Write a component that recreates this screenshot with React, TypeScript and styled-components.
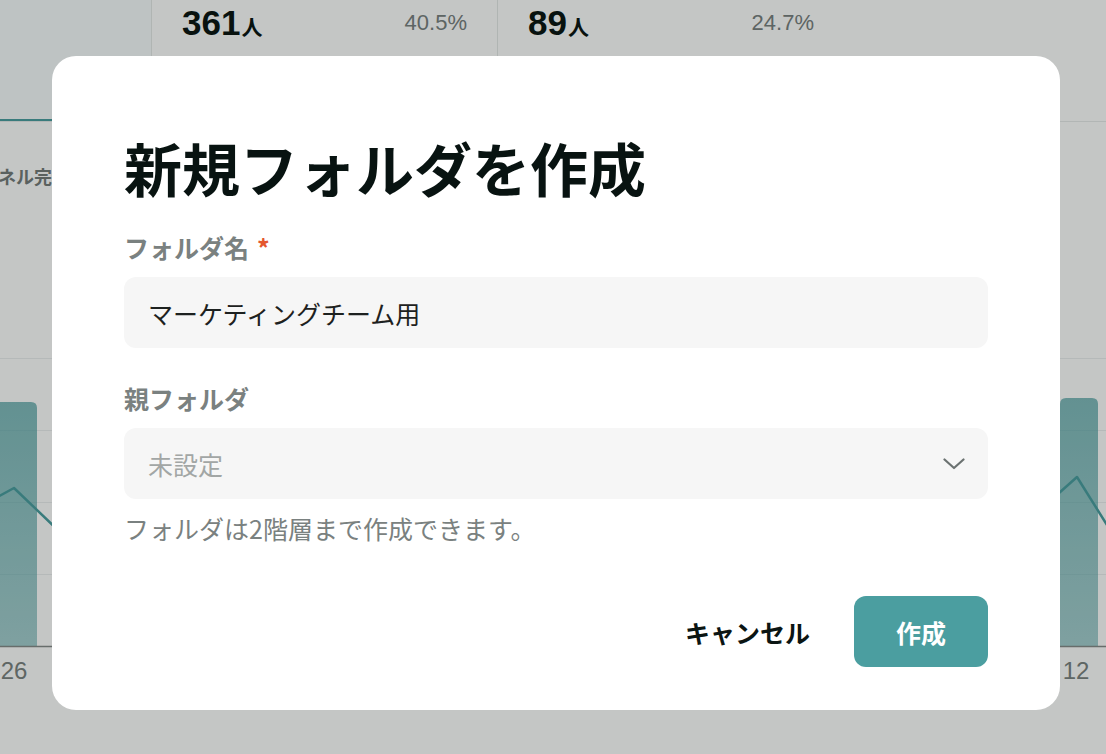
import React from "react";
import styled, { createGlobalStyle } from "styled-components";

const GlobalStyle = createGlobalStyle`
  * {
    box-sizing: border-box;
  }
  html,
  body {
    margin: 0;
    padding: 0;
  }
  body {
    font-family: "Noto Sans CJK JP", "Noto Sans", sans-serif;
    background: #ffffff;
    overflow: hidden;
  }
`;

const Page = styled.div`
  position: relative;
  width: 1106px;
  height: 754px;
  overflow: hidden;
  background: #ffffff;
`;

/* ---------- dashboard behind the dialog ---------- */

const StatsRow = styled.div`
  display: flex;
  height: 122px;
  border-bottom: 1px solid #e8ebea;
`;

const StatCell = styled.div<{ $width: number; $active?: boolean }>`
  flex: 0 0 ${(p) => p.$width}px;
  display: flex;
  justify-content: space-between;
  align-items: flex-start;
  padding: 3px 30px 0;
  border-right: 1px solid #e6e9e8;
  background: ${(p) => (p.$active ? "#f7fcfd" : "transparent")};
  border-bottom: ${(p) => (p.$active ? "2px solid #4b9ea0" : "none")};

  &:last-child {
    border-right: none;
  }
`;

const StatValue = styled.div`
  display: flex;
  align-items: baseline;
  font-family: "Liberation Sans", "Noto Sans CJK JP", sans-serif;
  font-size: 35px;
  font-weight: 700;
  line-height: 40px;
  color: #0b1513;
`;

const Unit = styled.span`
  font-family: "Noto Sans CJK JP", sans-serif;
  font-size: 21px;
  font-weight: 700;
  margin-left: 1px;
`;

const StatRate = styled.div`
  font-family: "Liberation Sans", sans-serif;
  font-size: 22px;
  line-height: 40px;
  color: #7a8181;
`;

const ChartPanel = styled.section`
  padding-top: 42px;
`;

const ChartTitle = styled.h3`
  margin: 0 0 0 -38px;
  font-size: 18px;
  font-weight: 700;
  line-height: 24px;
  color: #757c7b;
  white-space: nowrap;
`;

const ChartSvg = styled.svg`
  display: block;
  margin-top: 142px;
`;

/* ---------- dialog ---------- */

const Overlay = styled.div`
  position: absolute;
  inset: 0;
  background: rgba(0, 8, 4, 0.23);
  padding: 56px 0 0 52px;
`;

const Dialog = styled.div`
  width: 1008px;
  height: 654px;
  background: #ffffff;
  border-radius: 24px;
  padding: 77px 72px 0;
  display: flex;
  flex-direction: column;
`;

const Title = styled.h2`
  margin: 0;
  font-size: 58px;
  font-weight: 700;
  line-height: 68px;
  color: #081311;
`;

const Field = styled.div<{ $top: number }>`
  display: flex;
  flex-direction: column;
  gap: 14px;
  margin-top: ${(p) => p.$top}px;
`;

const Label = styled.label`
  font-size: 25px;
  font-weight: 700;
  line-height: 32px;
  color: #7a8180;
`;

const Required = styled.span`
  color: #e4572e;
  margin-left: 8px;
`;

const TextInput = styled.input`
  height: 71px;
  width: 100%;
  border: none;
  outline: none;
  border-radius: 12px;
  background: #f6f6f6;
  padding: 0 24px;
  font-family: "Noto Sans CJK JP", sans-serif;
  font-size: 25px;
  color: #1d2120;
`;

const SelectBox = styled.div`
  height: 71px;
  display: flex;
  align-items: center;
  justify-content: space-between;
  border-radius: 12px;
  background: #f6f6f6;
  padding: 0 23px 0 24px;
`;

const Placeholder = styled.span`
  font-size: 25px;
  color: #a2a6a5;
`;

const Hint = styled.p`
  margin: 13px 0 0;
  font-size: 25px;
  line-height: 32px;
  color: #7a8180;
`;

const Footer = styled.div`
  display: flex;
  justify-content: flex-end;
  gap: 8px;
  margin-top: 52px;
`;

const Button = styled.button<{ $primary?: boolean }>`
  height: 71px;
  border: none;
  border-radius: 12px;
  padding: 0 ${(p) => (p.$primary ? 42 : 36)}px;
  background: ${(p) => (p.$primary ? "#4b9ea0" : "transparent")};
  color: ${(p) => (p.$primary ? "#ffffff" : "#0b1513")};
  font-family: "Noto Sans CJK JP", sans-serif;
  font-size: 25px;
  font-weight: 700;
  cursor: pointer;
`;

const ChevronDown = () => (
  <svg width="22" height="12" viewBox="0 0 22 12" fill="none">
    <path
      d="M1.5 1.5 L11 10 L20.5 1.5"
      stroke="#6b7271"
      strokeWidth="2.2"
      strokeLinecap="round"
      strokeLinejoin="round"
    />
  </svg>
);

const gridLines = [28, 100, 172, 244];

const Chart = () => (
  <ChartSvg width={1106} height={370} viewBox="0 0 1106 370">
    <defs>
      <linearGradient id="barFill" x1="0" y1="0" x2="0" y2="1">
        <stop offset="0" stopColor="#4b9ea0" stopOpacity="0.7" />
        <stop offset="1" stopColor="#4b9ea0" stopOpacity="0.5" />
      </linearGradient>
    </defs>
    {gridLines.map((y) => (
      <line key={y} x1="0" x2="1106" y1={y + 0.5} y2={y + 0.5} stroke="#eceff0" />
    ))}
    <path d="M-1 316 V72 H31 Q37 72 37 78 V316 Z" fill="url(#barFill)" />
    <path d="M1060 316 V74 Q1060 68 1066 68 H1092 Q1098 68 1098 74 V316 Z" fill="url(#barFill)" />
    <polyline
      points="-10,171 14,158 62,204"
      fill="none"
      stroke="#4b9ea0"
      strokeWidth="2.5"
      strokeLinejoin="round"
    />
    <polyline
      points="1040,180 1077,147 1112,203"
      fill="none"
      stroke="#4b9ea0"
      strokeWidth="2.5"
      strokeLinejoin="round"
    />
    <line x1="0" x2="1106" y1="316.5" y2="316.5" stroke="#868c8b" strokeWidth="1.5" />
    <text
      x="14"
      y="349"
      textAnchor="middle"
      fontFamily="Liberation Sans, sans-serif"
      fontSize="24"
      fill="#7b8281"
    >
      26
    </text>
    <text
      x="1076"
      y="349"
      textAnchor="middle"
      fontFamily="Liberation Sans, sans-serif"
      fontSize="24"
      fill="#7b8281"
    >
      12
    </text>
  </ChartSvg>
);

const App = () => {
  return (
    <>
      <GlobalStyle />
      <Page>
        <StatsRow>
          <StatCell $width={152} $active />
          <StatCell $width={346}>
            <StatValue>
              361<Unit>人</Unit>
            </StatValue>
            <StatRate>40.5%</StatRate>
          </StatCell>
          <StatCell $width={346}>
            <StatValue>
              89<Unit>人</Unit>
            </StatValue>
            <StatRate>24.7%</StatRate>
          </StatCell>
        </StatsRow>
        <ChartPanel>
          <ChartTitle>ファネル完了率</ChartTitle>
          <Chart />
        </ChartPanel>

        <Overlay>
          <Dialog role="dialog" aria-modal="true">
            <Title>新規フォルダを作成</Title>
            <Field $top={30}>
              <Label>
                フォルダ名<Required>*</Required>
              </Label>
              <TextInput defaultValue="マーケティングチーム用" readOnly />
            </Field>
            <Field $top={34}>
              <Label>親フォルダ</Label>
              <SelectBox>
                <Placeholder>未設定</Placeholder>
                <ChevronDown />
              </SelectBox>
            </Field>
            <Hint>フォルダは2階層まで作成できます。</Hint>
            <Footer>
              <Button>キャンセル</Button>
              <Button $primary>作成</Button>
            </Footer>
          </Dialog>
        </Overlay>
      </Page>
    </>
  );
};

export default App;
